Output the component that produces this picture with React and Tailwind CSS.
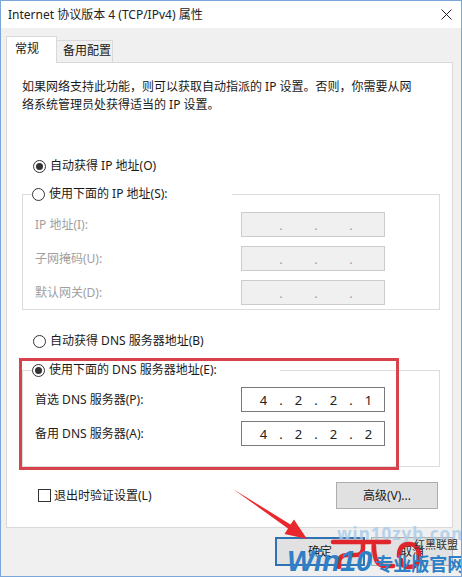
const FONT = "font-['Noto_Sans','Noto_Sans_CJK_SC',sans-serif]";

function Radio({ checked }) {
  return (
    <span className="w-[13px] h-[13px] rounded-full border border-[#333] flex items-center justify-center shrink-0 bg-white">
      {checked && <span className="w-[7px] h-[7px] rounded-full bg-[#333]" />}
    </span>
  );
}

function IpBox({ values, disabled }) {
  const parts = values || ["", "", "", ""];
  return (
    <div
      className={
        "w-[144px] h-[25px] border flex items-center pl-[8px] text-[13px] " +
        (disabled ? "border-[#cccccc] bg-[#f0f0f0] text-[#a0a0a0]" : "border-[#7a7a7a] bg-white text-[#222]")
      }
    >
      {parts.map((v, i) => (
        <div key={i} className="flex items-center">
          <span className="w-[27px] text-center">{v}</span>
          {i < 3 && <span className="w-[8px] text-center">.</span>}
        </div>
      ))}
    </div>
  );
}

function Row({ label, values, disabled }) {
  return (
    <div className="flex items-center h-[25px]">
      <span className={"w-[209px] pl-[3px] " + (disabled ? "text-[#a0a0a0]" : "text-[#222]")}>{label}</span>
      <IpBox values={values} disabled={disabled} />
    </div>
  );
}

export default function App() {
  return (
    <div className={"relative w-[462px] h-[577px] flex flex-col border border-[#7aa6da] bg-[#f0f0f0] text-[12px] leading-[18px] text-[#1a1a1a] overflow-hidden " + FONT}>
      {/* Title bar */}
      <div className="h-[27px] bg-white flex items-center justify-between pl-[7px] pr-[9px] shrink-0">
        <span className="text-[12px] text-[#222]">Internet 协议版本 4 (TCP/IPv4) 属性</span>
        <svg width="11" height="11" viewBox="0 0 11 11">
          <path d="M0.5 0.5 L10.5 10.5 M10.5 0.5 L0.5 10.5" stroke="#222" strokeWidth="1" />
        </svg>
      </div>

      {/* Body */}
      <div className="flex-1 flex flex-col pl-[5px] pr-[8px] pt-[8px]">
        {/* Tabs */}
        <div className="flex items-end h-[26px]">
          <div className="relative z-10 -mb-px h-[27px] w-[51px] bg-white border border-b-0 border-[#d9d9d9] pl-[8px] pt-[3px]">
            常规
          </div>
          <div className="h-[22px] w-[56px] border border-l-0 border-b-0 border-[#d9d9d9] bg-[#f0f0f0] pl-[6px] pt-[1px]">
            备用配置
          </div>
        </div>

        {/* Panel */}
        <div className="relative h-[466px] bg-white border border-[#d9d9d9] flex flex-col">
          <p className="pl-[15px] pt-[15px] pr-[20px]">
            如果网络支持此功能，则可以获取自动指派的 IP 设置。否则，你需要从网
            <br />
            络系统管理员处获得适当的 IP 设置。
          </p>

          <div className="flex items-center gap-[4px] ml-[26px] mt-[43px] h-[18px]">
            <Radio checked />
            <span>自动获得 IP 地址(O)</span>
          </div>

          <fieldset className="ml-[15px] mt-[10px] w-[418px] border border-[#dcdcdc] pl-[9px] pb-[4px]">
            <legend className="w-[200px] h-[18px] flex items-center gap-[4px] bg-white">
              <Radio />
              <span>使用下面的 IP 地址(S):</span>
            </legend>
            <div className="flex flex-col gap-[9px] mt-[9px]">
              <Row label="IP 地址(I):" disabled />
              <Row label="子网掩码(U):" disabled />
              <Row label="默认网关(D):" disabled />
            </div>
          </fieldset>

          <div className="flex items-center gap-[4px] ml-[26px] mt-[22px] h-[18px]">
            <Radio />
            <span>自动获得 DNS 服务器地址(B)</span>
          </div>

          <fieldset className="ml-[15px] mt-[11px] w-[418px] border border-[#dcdcdc] pl-[9px] pb-[20px]">
            <legend className="w-[248px] h-[18px] flex items-center gap-[4px] bg-white">
              <Radio checked />
              <span>使用下面的 DNS 服务器地址(E):</span>
            </legend>
            <div className="flex flex-col gap-[9px] mt-[8px]">
              <Row label="首选 DNS 服务器(P):" values={["4", "2", "2", "1"]} />
              <Row label="备用 DNS 服务器(A):" values={["4", "2", "2", "2"]} />
            </div>
          </fieldset>

          <div className="flex items-center justify-between mt-[15px] pl-[31px] pr-[14px] h-[27px]">
            <div className="flex items-center gap-[3px]">
              <span className="w-[13px] h-[13px] border border-[#333] bg-white" />
              <span>退出时验证设置(L)</span>
            </div>
            <button className="w-[102px] h-[27px] bg-[#e1e1e1] border border-[#adadad] text-[12px]">高级(V)...</button>
          </div>

          {/* annotation box */}
          <div className="absolute left-[12px] top-[295px] w-[380px] h-[112px] border-[3px] border-[#d8424d] pointer-events-none" />
        </div>

        {/* Bottom buttons */}
        <div className="flex justify-end gap-[6px] pt-[9px]">
          <button className="w-[90px] h-[29px] bg-[#e1e1e1] border-2 border-[#2f73b5] text-[12px]">确定</button>
          <button className="w-[82px] h-[29px] bg-[#e1e1e1] border border-[#adadad] text-[12px]">取消</button>
        </div>
      </div>

      {/* red arrow */}
      <svg className="absolute left-0 top-0 pointer-events-none" width="462" height="577">
        <polygon points="232,488 289.5,523.5 293,518.5 306,538 283.5,533 287,527.5" fill="#e8282d" />
      </svg>

      {/* watermark */}
      <div className="absolute left-[336px] top-[523px] whitespace-nowrap text-[17px] leading-[20px] font-bold text-[#a8cbe9] opacity-80 pointer-events-none tracking-[1px]">
        win10zyb.com
      </div>
      <svg className="absolute left-[326px] top-[535px] pointer-events-none" width="100" height="36" viewBox="0 0 100 36">
        <path d="M6 6 H62 M36 6 V12 Q36 19 29 19 H20 Q12 19 12 27 V31 M47 10 Q47 30 58 30 H66 M72 20 Q72 8 82 8 Q92 8 92 20 Q92 31 82 31 Q74 31 74 24" stroke="#e0262c" strokeWidth="4.5" fill="none" strokeLinecap="round" />
      </svg>
      <div className="absolute left-[413px] top-[537px] whitespace-nowrap text-[11px] leading-[14px] text-[#333] pointer-events-none">红黑联盟</div>
      <div className="absolute left-[286px] top-[545px] w-[174px] whitespace-nowrap flex items-baseline text-[#2d7fc6] font-bold pointer-events-none">
        <span className="italic text-[29px] leading-[30px] font-['Liberation_Sans',sans-serif]">Win10</span>
        <span className="text-[18px] leading-[30px] ml-[3px]">专业版官网</span>
      </div>
    </div>
  );
}
